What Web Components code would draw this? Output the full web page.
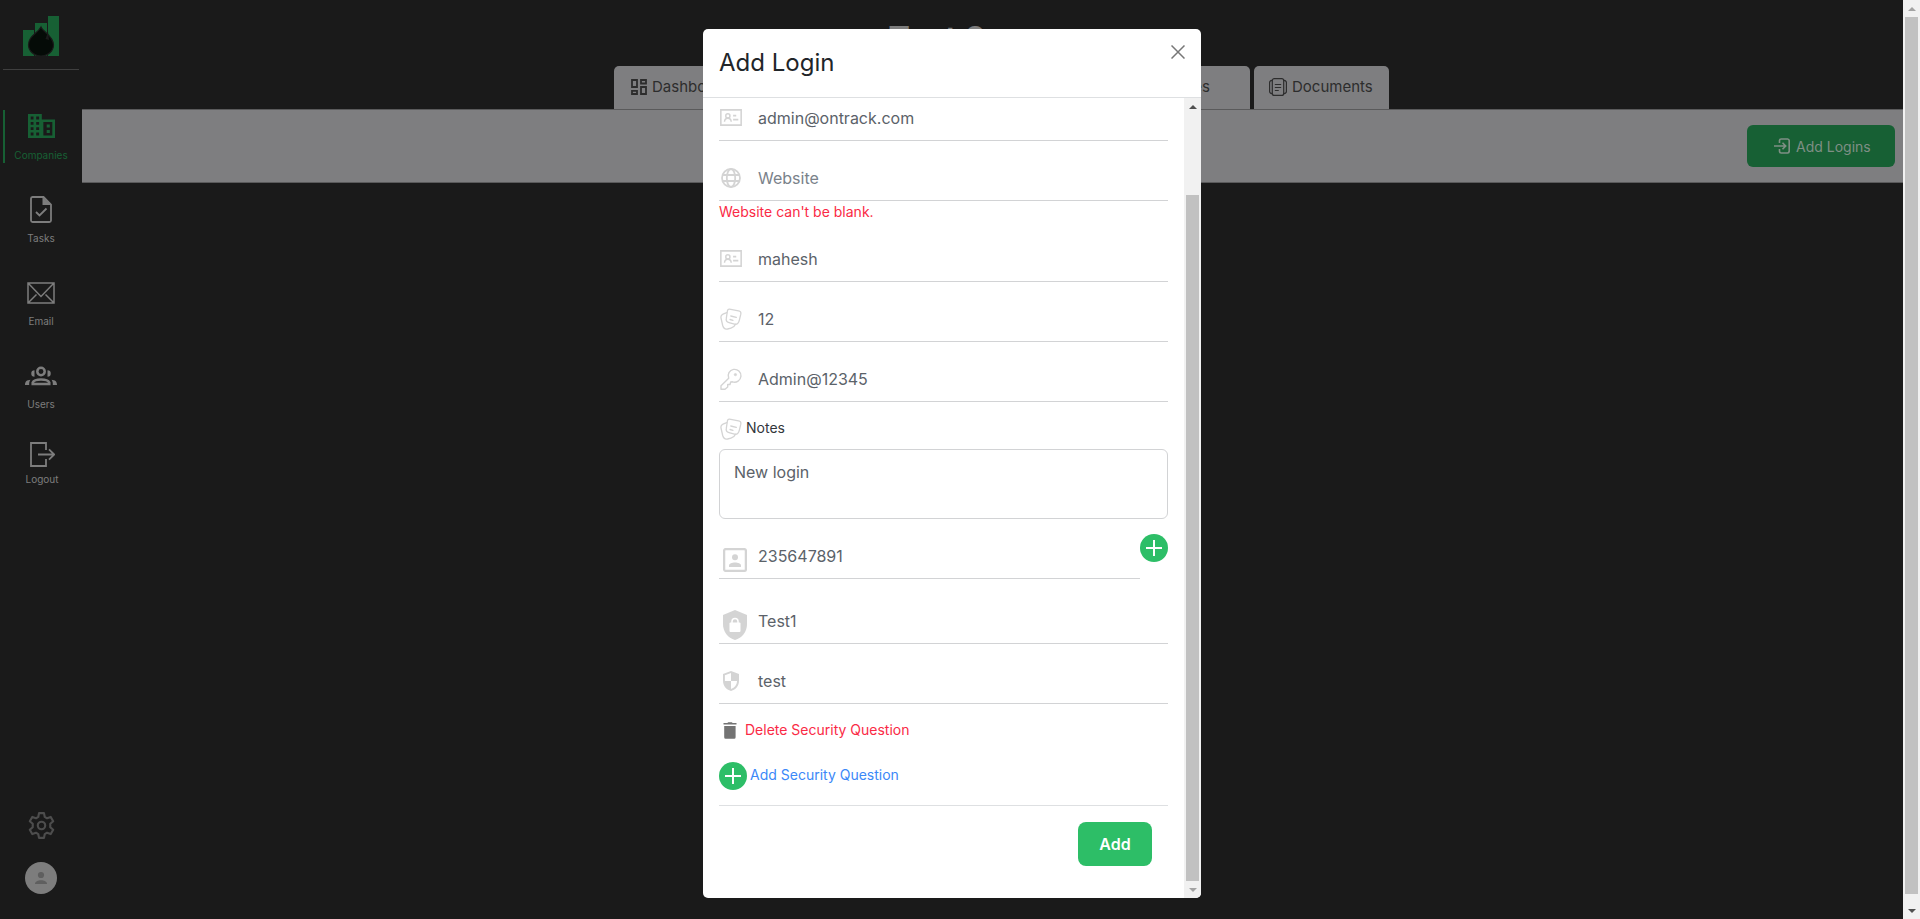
<!DOCTYPE html>
<html lang="en">
<head>
<meta charset="utf-8">
<title>Add Login</title>
<style>
html,body{margin:0;height:100%;overflow:hidden;background:#1a1a1a;font-family:Inter,"Liberation Sans",sans-serif}
</style>
</head>
<body>
<login-page></login-page>
<script>
const ICONS={
logo:['0 0 36 40','<g fill="#176034"><path d="M0 14h11v26H0zM12 7h12v33H12zM25 0h11v40H25z"/></g><path d="M18 11c2 5 12.500 9 12.500 18A12.500 11 0 0 1 5.500 29C5.500 20 14 18 18 11z" fill="#050b07" stroke="#1a1a1a" stroke-width="1.200"/><path d="M25 16l-2.500 7 3.500 1z" fill="#1a1a1a"/>'],
companies:['0 0 26 24','<path fill="none" stroke="currentColor" stroke-width="2.600" d="M1.300 1.300H12V22.700H1.300zM12 6.700H24.700V22.700H12M1.300 6.700H12M1.300 12H12M1.300 17.300H12M6.600 1.300V22.700M13.500 6v17"/><path fill="currentColor" d="M18 10.500h3v3h-3zM18 16h3v3h-3z"/>'],
tasks:['0 0 22 27','<path fill="none" stroke="currentColor" stroke-width="1.800" d="M2.500 1H13.500L21 8.500V24.500A1.600 1.600 0 0 1 19.400 26H2.600A1.600 1.600 0 0 1 1 24.500V2.600A1.600 1.600 0 0 1 2.500 1zM6 16l3.500 3.500 7-7"/><path fill="currentColor" d="M12.500 1v8H21z"/>'],
email:['0 0 28 22','<path fill="none" stroke="currentColor" stroke-width="1.500" d="M1 1H27V21H1zM1.500 1.500L14 14.500 26.500 1.500M1.500 20.500l8-8M26.500 20.500l-8-8"/>'],
users:['0 0 32 20','<g fill="none" stroke="currentColor" stroke-width="2.500"><circle cx="16" cy="5.500" r="3.700"/><path d="M7.700 18V16.500c2-4 14.600-4 16.600 0V18z"/></g><path fill="currentColor" d="M9.500 4.200v6.500A3.200 3.200 0 1 1 9.500 4.200zM22.500 4.200v6.500A3.200 3.200 0 1 0 22.500 4.200zM0 19c0-3.500 2-5 5.500-5.200C4.500 15 4 17 4.200 19zM32 19c0-3.500-2-5-5.500-5.200 1 1.200 1.500 3.200 1.300 5.200z"/>'],
logout:['0 0 25 25','<path fill="none" stroke="currentColor" stroke-width="1.800" d="M16 8V1H1V24H16V17M8 12.500H24M19 7.300l5.200 5.200L19 17.700"/>'],
gear:['0 0 24 24','<path fill="none" stroke="currentColor" stroke-width="1.900" stroke-linejoin="round" d="M9.800 1h4.400l.7 3.400 2 1.200 3.300-1.200 2.200 3.800-2.600 2.300v3l2.600 2.300-2.200 3.800-3.300-1.200-2 1.200-.7 3.400H9.800l-.7-3.400-2-1.200-3.300 1.200L1.600 15.800l2.600-2.300v-3L1.600 8.200l2.200-3.800 3.300 1.200 2-1.200z"/><circle cx="12" cy="12" r="3.300" fill="none" stroke="currentColor" stroke-width="1.900"/>'],
avatar:['0 0 32 32','<circle cx="16" cy="16" r="16" fill="#7d7d7d"/><g fill="#5f5f5f"><circle cx="16" cy="13" r="3.100"/><path d="M10 22c0-5 12-5 12 0z"/></g>'],
dashboard:['0 0 16 16','<path fill="none" stroke="currentColor" stroke-width="1.800" d="M1 1h5v7H1zM10 1h5v3.500h-5zM1 11.800h5V15H1zM10 8h5v7h-5z"/>'],
documents:['0 0 18 18','<g fill="none" stroke="currentColor" stroke-width="1.200" stroke-linecap="round"><rect x="3.300" y=".6" width="11.400" height="16.800" rx="2"/><path d="M3 2.300C1.300 2.600.6 3.200.6 4.500v9c0 1.300.7 1.900 2.400 2.200M15 2.300c1.700.3 2.400.9 2.400 2.200v9c0 1.300-.7 1.900-2.400 2.200M6.300 6.500h5.400M6.300 9.500h5.400M6.300 12.500h3"/></g>'],
login:['0 0 16 16','<path fill="none" stroke="currentColor" stroke-width="1.600" d="M5.500 5V2.600A1.700 1.700 0 0 1 7.200 1H13.600A1.700 1.700 0 0 1 15.200 2.600V13.400A1.700 1.700 0 0 1 13.600 15H7.200A1.700 1.700 0 0 1 5.500 13.400V11M0 8H11.500M8.500 4.800L11.700 8 8.500 11.200"/>'],
close:['0 0 14 14','<path fill="none" stroke="currentColor" stroke-width="1.500" d="M.5.5l13 13M13.500.5l-13 13"/>'],
card:['0 0 21 16','<path fill="none" stroke="currentColor" stroke-width="1.500" d="M.8.800H20.200V15.200H.8zM12.500 6.200h3M12.500 10h5"/><g fill="none" stroke="currentColor" stroke-width="1.400"><circle cx="7.500" cy="6.500" r="2"/><path d="M4.300 12c.3-4.400 6.100-4.400 6.400 0"/></g>'],
globe:['0 0 20 20','<g fill="none" stroke="currentColor" stroke-width="1.800"><circle cx="10" cy="10" r="9"/><ellipse cx="10" cy="10" rx="4.200" ry="9"/><path d="M1.500 7h17M1.500 13h17"/></g>'],
notes:['0 0 22 22','<g fill="none" stroke="currentColor" stroke-width="1.300" stroke-linecap="round" stroke-linejoin="round"><path d="M9.500 1.100l9 1.700c2 .4 2.700 1.500 2.300 3.400l-1.300 5.500c-.7 3.500-2.500 5-5 4.400l-5.500-1.400c-2.400-.6-3.200-2-2.700-4.300L7.400 3c.3-1.500.9-2.100 2.100-1.900z"/><path d="M6.700 4.700L3 6.200C1.200 7 .6 8.200 1 10l1.700 7.500c.8 3 2.300 4 4.800 3.500l3.500-.8c2-.5 3.500-1.600 4.500-3.900M10.800 8l5.500 1.400M10 11.500l3 .8"/></g>'],
key:['0 0 22 22','<g fill="none" stroke="currentColor" stroke-width="1.400" stroke-linejoin="round"><path d="M8.700 10.300A6.400 6.400 0 1 1 12.500 13.800L10.700 14 10 16.500H7.700V19L5 21.300H1V17.700z"/><circle cx="15.400" cy="6.600" r="1.200" fill="currentColor" stroke-width=".6"/></g>'],
account:['0 0 24 24','<rect x="1.100" y="1.100" width="21.800" height="21.800" rx="1.700" fill="none" stroke="currentColor" stroke-width="2.300"/><g fill="currentColor"><circle cx="12" cy="9.300" r="3"/><path d="M6 19v-1.500c0-4 12-4 12 0V19z"/></g>'],
shieldlock:['0 0 24 30','<path fill="currentColor" d="M12 0L24 5v9c0 8-5 14-12 16C5 28 0 22 0 14V5z"/><path fill="#fff" d="M7.500 12.500h9a1 1 0 0 1 1 1v7.500a1 1 0 0 1-1 1h-9a1 1 0 0 1-1-1v-7.500a1 1 0 0 1 1-1z"/><path fill="none" stroke="#fff" stroke-width="1.500" d="M9 13v-1.500a3 3 0 0 1 6 0V13"/>'],
shield:['0 0 16 20','<path fill="currentColor" d="M8 0L16 3v6.500C16 15 13 18.500 8 20 3 18.500 0 15 0 9.500V3z"/><path fill="#fff" d="M8 2v8H1.900V4.300zM8 10h6.100C13.800 14 11.800 16.700 8 18z"/>'],
trash:['0 0 14 17','<path fill="#737373" d="M1.200 4h11.400v11.200A1.500 1.500 0 0 1 11 16.700H2.800A1.500 1.500 0 0 1 1.200 15.200zM.5 1h3.800L5.300.2h3.400l1 .8h3.800v1.500H.5z"/>'],
plus:['0 0 28 28','<circle cx="14" cy="14" r="14" fill="#2dbe67"/><path stroke="#fff" stroke-width="2" d="M14 6v16M6 14h16"/>']
};
const define=(name,css,html)=>customElements.define(name,class extends HTMLElement{
  constructor(){super();this.attachShadow({mode:'open'}).innerHTML=`<style>:host{display:block;box-sizing:border-box}${css}</style>${html}`;}
});
customElements.define('ui-icon',class extends HTMLElement{
  connectedCallback(){
    const [box,body]=ICONS[this.getAttribute('name')];
    const [, ,w,h]=box.split(' ');
    const width=this.getAttribute('w')||w,height=this.getAttribute('h')||h;
    (this.shadowRoot||this.attachShadow({mode:'open'})).innerHTML=`<style>:host{display:block;flex:none;width:${width}px;height:${height}px}svg{display:block}</style><svg viewBox="${box}" width="${width}" height="${height}" preserveAspectRatio="none">${body}</svg>`;
  }
});
define('scroll-bar',`:host{width:17px;background:#f1f1f1;display:flex;flex-direction:column;align-items:center;flex:none}
i{height:17px;width:17px;flex:none;display:grid;place-items:center}
i::before{content:"";border:4px solid transparent;border-top:0;border-bottom:4px solid var(--up,#a3a3a3)}
i:last-child::before{border-bottom:0;border-top:4px solid var(--down,#a3a3a3)}
b{width:13px;flex:1;margin-top:var(--gap,0);margin-bottom:var(--end,0);background:#c1c1c1}`,`<i></i><b></b><i></i>`);
define('nav-item',`:host{display:flex;flex-direction:column;align-items:center;color:#7d7d7d;font-size:10px;line-height:12px;height:var(--h,83px);width:82px}
div{height:var(--ih,43px);display:flex;align-items:flex-start}`,`<div><slot name="icon"></slot></div><slot></slot>`);
define('side-bar',`:host{width:82px;display:flex;flex-direction:column;align-items:center;padding-top:16px;height:919px;flex:none}
.sep{width:76px;height:1px;background:#3f3f3f;margin-top:13px}
.list{margin-top:40px;width:82px;position:relative}
.list::before{content:"";position:absolute;left:3px;top:0;width:2px;height:53px;background:#176034}
.foot{margin-top:auto;display:flex;flex-direction:column;align-items:center;gap:23px;padding-bottom:25px;color:#4d4d4d}`,
`<ui-icon name="logo"></ui-icon><div class="sep"></div><div class="list">
<nav-item style="padding-top:4px;--ih:35px;--h:86px;color:#176034"><ui-icon slot="icon" name="companies" w="27"></ui-icon>Companies</nav-item>
<nav-item style="--ih:36px;--h:86px"><ui-icon slot="icon" name="tasks"></ui-icon>Tasks</nav-item>
<nav-item style="--ih:33px;--h:84px"><ui-icon slot="icon" name="email"></ui-icon>Email</nav-item>
<nav-item style="--ih:32px;--h:76px"><ui-icon slot="icon" name="users"></ui-icon>Users</nav-item>
<nav-item style="--ih:31px;--h:60px;padding-left:2px;box-sizing:border-box"><ui-icon slot="icon" name="logout"></ui-icon>Logout</nav-item></div>
<div class="foot"><ui-icon name="gear" w="27" h="27"></ui-icon><ui-icon name="avatar"></ui-icon></div>`);
define('tab-item',`:host{display:flex;align-items:center;gap:5px;height:43px;background:#7e7e80;border-radius:5px 5px 0 0;padding:0 17px 1px;color:#2d2d2d;font-size:15px;line-height:20px}`,`<slot name="icon"></slot><slot></slot>`);
define('main-area',`:host{flex:1;display:flex;flex-direction:column;align-items:stretch}
h1{margin:0;height:66px;box-sizing:border-box;padding:19px 111px 0 0;text-align:center;font-size:33px;font-weight:600;line-height:39px;color:#7d7d7d}
.tabs{display:flex;gap:4px;padding-left:532px;height:43px}
.band{height:74px;box-sizing:border-box;background:#7e7e80;border-top:1px solid #5a5a5b;border-bottom:1px solid #5a5a5b;display:flex;justify-content:flex-end;padding:15px 8px}
.btn{width:148px;height:42px;flex:none;border-radius:6px;background:#176034;display:flex;align-items:center;gap:6px;padding-left:27px;box-sizing:border-box;color:#7f8f85;font-size:14px}`,
`<h1>Test 2</h1><div class="tabs"><tab-item style="width:140px"><ui-icon slot="icon" name="dashboard"></ui-icon>Dashboard</tab-item><tab-item style="width:492px;justify-content:flex-end;padding-right:40px">Files</tab-item><tab-item style="width:135px;padding-left:15px"><ui-icon slot="icon" name="documents"></ui-icon>Documents</tab-item></div>
<div class="band"><div class="btn"><ui-icon name="login"></ui-icon><span>Add Logins</span></div></div>`);
define('form-field',`:host{display:flex;align-items:flex-end;height:60px;border-bottom:1px solid #d2d3d5;color:#5b6269;font-size:16px;line-height:24px}
div{width:39px;flex:none;height:36px;display:flex;align-items:flex-start}
span{padding-bottom:10px}`,`<div><slot name="icon"></slot></div><span><slot></slot></span>`);
define('login-dialog',`:host{position:absolute;left:703px;top:29px;width:498px;height:869px;background:#fff;border-radius:5px;overflow:hidden;display:flex;flex-direction:column}
header{height:69px;box-sizing:border-box;border-bottom:1px solid #dee0e2;display:flex;justify-content:space-between;padding:16px 16px 0 16px;color:#212529;flex:none}
h2{margin:0;font-weight:400;font-size:24px;line-height:36px}
header ui-icon{color:#777}
.main{flex:1;display:flex;min-height:0}
.body{flex:1;padding:0 16px;color:#d4d4d4}
.err{font-size:14px;line-height:21px;height:21px;color:#fa2a45}
.lab{height:47px;display:flex;align-items:flex-start;padding-top:16px;box-sizing:border-box;font-size:14px;line-height:20px;color:#33373b;gap:4px}
.lab ui-icon{color:#d4d4d4;margin-left:1px}
.area{height:70px;box-sizing:border-box;border:1px solid #d2d3d5;border-radius:6px;padding:10px 14px;font-size:16px;line-height:24px;color:#5b6269}
.split{display:flex;height:60px;align-items:flex-start}
.split form-field{flex:1}.split>ui-icon{margin-top:15px}
.act{display:flex;font-size:14px;line-height:20px}
.del{margin-top:16px;color:#fa2a45;padding-left:4px;gap:8px;align-items:center;height:21px}
.del span{padding-bottom:2px}
.add{margin-top:21px;color:#3b88f8;gap:3px;height:28px}
.add span{padding-top:3px}
.end{margin-top:15px;border-top:1px solid #dee0e2;display:flex;justify-content:flex-end;padding:16px 16px 0}
.end button{all:unset;width:74px;height:44px;line-height:44px;border-radius:8px;background:#2dbe67;color:#fff;font-weight:600;font-size:16px;text-align:center}
form-field ui-icon{color:#d4d4d4}`,
`<header><h2>Add Login</h2><ui-icon name="close"></ui-icon></header><div class="main"><div class="body">
<form-field style="height:43px"><ui-icon slot="icon" name="card" w="22" h="17" style="margin:5px 0 0 1px"></ui-icon>admin@ontrack.com</form-field>
<form-field style="color:#7a828a"><ui-icon slot="icon" name="globe" style="margin:4px 0 0 2px"></ui-icon>Website</form-field>
<div class="err">Website can't be blank.</div>
<form-field><ui-icon slot="icon" name="card" w="22" h="17" style="margin:5px 0 0 1px"></ui-icon>mahesh</form-field>
<form-field><ui-icon slot="icon" name="notes" style="margin:3px 0 0 1px"></ui-icon>12</form-field>
<form-field><ui-icon slot="icon" name="key" style="margin:3px 0 0 1px"></ui-icon>Admin@12345</form-field>
<div class="lab"><ui-icon name="notes"></ui-icon><span>Notes</span></div>
<div class="area">New login</div>
<div class="split"><form-field><ui-icon slot="icon" name="account" style="margin:6px 0 0 4px"></ui-icon>235647891</form-field><ui-icon name="plus"></ui-icon></div>
<form-field style="height:65px"><ui-icon slot="icon" name="shieldlock" style="margin:3px 0 0 4px"></ui-icon>Test1</form-field>
<form-field><ui-icon slot="icon" name="shield" style="margin:4px 0 0 4px"></ui-icon>test</form-field>
<div class="act del"><ui-icon name="trash"></ui-icon><span>Delete Security Question</span></div>
<div class="act add"><ui-icon name="plus"></ui-icon><span>Add Security Question</span></div>
<div class="end"><button>Add</button></div>
</div><scroll-bar style="--gap:80px;--up:#505050"></scroll-bar></div>`);
define('login-page',`:host{position:relative;display:flex;width:1920px;height:919px}`,
`<side-bar></side-bar><main-area></main-area><scroll-bar style="--down:#505050;--end:8px"></scroll-bar><login-dialog></login-dialog>`);
</script>
</body>
</html>
